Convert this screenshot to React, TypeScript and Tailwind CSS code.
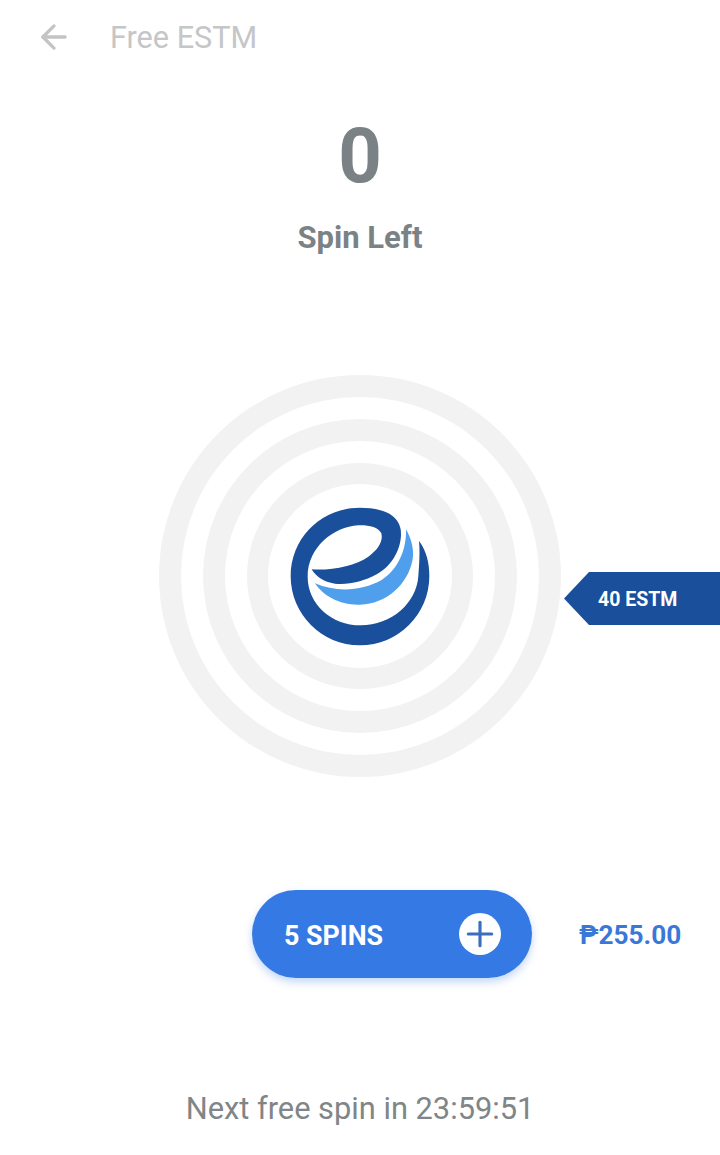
import React from 'react'
import { ArrowLeft, Plus } from 'lucide-react'

function Logo() {
  return (
    <svg viewBox="0 0 540 540" className="w-[180px] h-[180px]">
      <path
        fill="#1a4f9c"
        d="M447 165 C470 195 478 232 478 270 C478 385 385 478 270 478 C155 478 62 385 62 270 C62 155 155 65 270 65 C335 65 385 85 392 130 C398 175 375 235 320 265 C280 287 235 297 195 293 C160 288 138 272 125 250 C185 254 255 240 295 212 C325 190 340 165 334 142 C324 122 295 117 265 118 C190 122 113 185 113 272 C113 355 185 418 272 418 C365 418 440 350 445 270 C448 230 450 195 447 165 Z"
      />
      <path
        fill="#4f9fec"
        d="M135 292 C200 320 275 315 335 282 C385 250 410 190 408 130 C425 160 434 195 427 225 C412 295 350 354 270 356 C210 358 160 330 135 292 Z"
      />
    </svg>
  )
}

function Wheel() {
  return (
    <div className="w-[402px] h-[402px] rounded-full bg-[#f2f2f2] flex items-center justify-center">
      <div className="w-[358px] h-[358px] rounded-full bg-white flex items-center justify-center">
        <div className="w-[314px] h-[314px] rounded-full bg-[#f2f2f2] flex items-center justify-center">
          <div className="w-[270px] h-[270px] rounded-full bg-white flex items-center justify-center">
            <div className="w-[226px] h-[226px] rounded-full bg-[#f2f2f2] flex items-center justify-center">
              <div className="w-[184px] h-[184px] rounded-full bg-white flex items-center justify-center">
                <Logo />
              </div>
            </div>
          </div>
        </div>
      </div>
    </div>
  )
}

export default function App() {
  return (
    <main className="relative w-[720px] h-[1155px] bg-white overflow-hidden flex flex-col font-['Roboto',sans-serif]">
      {/* header */}
      <div className="flex items-center h-[74px] pl-[35px]">
        <ArrowLeft className="w-[38px] h-[38px] text-[#c4c4c4]" strokeWidth={2.1} />
        <span className="ml-[37px] pt-[2px] text-[30.6px] text-[#c4c6c7]">Free ESTM</span>
      </div>

      {/* spins left */}
      <div className="flex flex-col items-center">
        <div className="mt-[38px] text-[76px] leading-[88px] font-bold text-[#7b8286]">0</div>
        <div className="mt-[18px] text-[31px] leading-[40px] font-bold text-[#7b8286]">Spin Left</div>
      </div>

      {/* wheel */}
      <div className="mt-[117px] flex justify-center">
        <Wheel />
      </div>

      {/* buy row */}
      <div className="mt-[113px] flex items-center pl-[252px]">
        <button className="w-[280px] h-[88px] rounded-full bg-[#357ae4] shadow-[0_4px_8px_rgba(53,122,228,0.3)] flex items-center justify-between pl-[32px] pr-[31px]">
          <span className="pt-[4px] text-[26.8px] font-bold text-white">5 SPINS</span>
          <span className="w-[42px] h-[42px] rounded-full bg-white flex items-center justify-center">
            <Plus className="w-[40px] h-[40px] text-[#3a6fc0]" strokeWidth={1.9} />
          </span>
        </button>
        <span className="ml-[47px] pt-[4px] text-[26.2px] font-bold text-[#3a78d8]">₱255.00</span>
      </div>

      {/* countdown */}
      <div className="mt-[111px] text-center text-[30.8px] leading-[40px] text-[#808587]">
        Next free spin in 23:59:51
      </div>

      {/* prize tag over the wheel */}
      <div className="absolute right-0 top-[572px] w-[156px] h-[53px] bg-[#1a4f9c] [clip-path:polygon(25px_0,100%_0,100%_100%,25px_100%,0_50%)] flex items-center pl-[34px]">
        <span className="pt-[2px] text-[19.5px] font-bold text-white">40 ESTM</span>
      </div>
    </main>
  )
}
